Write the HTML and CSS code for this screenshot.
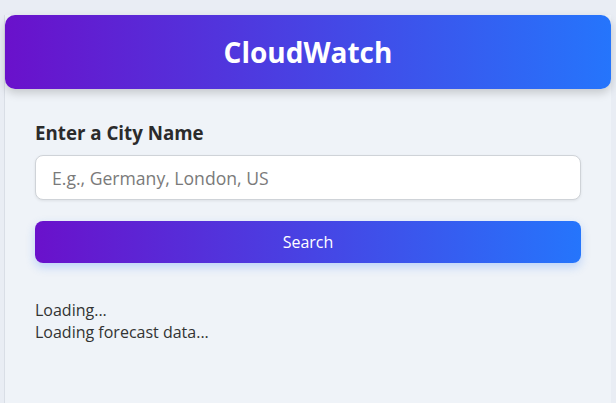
FILE: index.html
```html
<!DOCTYPE html>
<html lang="en">
<head>
<meta charset="utf-8">
<title>CloudWatch</title>
<link rel="stylesheet" href="styles.css">
</head>
<body>
<div class="app">
  <header class="app-header">
    <h1 class="app-title">CloudWatch</h1>
  </header>
  <main class="content">
    <label class="city-label" for="city">Enter a City Name</label>
    <input class="city-input" id="city" type="text" placeholder="E.g., Germany, London, US">
    <button class="search-btn" type="button">Search</button>
    <div class="status">
      <div>Loading...</div>
      <div>Loading forecast data...</div>
    </div>
  </main>
</div>
</body>
</html>
```

FILE: styles.css
```css
* { box-sizing: border-box; }
html, body { height: 100%; }
body {
  margin: 0;
  padding: 15px 5px 0 4px;
  background: #e9edf4;
  font-family: "Open Sans", "Noto Sans", sans-serif;
  color: #333;
}
.app {
  min-height: 100%;
  background: #eff3f8;
  border-left: 1px solid #d9dee6;
}
.app-header {
  height: 74px;
  border-radius: 10px;
  background: linear-gradient(90deg, #6a11cb, #2575fc);
  box-shadow: 0 4px 10px rgba(0, 0, 0, 0.18);
  display: flex;
  align-items: center;
  justify-content: center;
}
.app-title {
  margin: 0;
  color: #fff;
  font-size: 28px;
  font-weight: 700;
}
.content {
  padding: 30px 30px;
  display: flex;
  flex-direction: column;
}
.city-label {
  font-size: 18.72px;
  font-weight: 700;
  line-height: 27px;
  color: #2b2b2b;
  margin-bottom: 9px;
}
.city-input {
  height: 45px;
  border: 1px solid #cfd3d8;
  border-radius: 8px;
  background: #fff;
  padding: 0 16px;
  font-family: inherit;
  font-size: 17.6px;
  color: #333;
  box-shadow: 0 1px 3px rgba(0, 0, 0, 0.08);
}
.city-input::placeholder { color: #7a7a7a; }
.search-btn {
  margin-top: 21px;
  height: 42px;
  border: none;
  border-radius: 8px;
  background: linear-gradient(90deg, #6a11cb, #2575fc);
  color: #fff;
  font-family: inherit;
  font-size: 16px;
  font-weight: 400;
  box-shadow: 0 4px 10px rgba(37, 117, 252, 0.25);
}
.status {
  margin-top: 36px;
  font-size: 16px;
  line-height: 22px;
}
```
